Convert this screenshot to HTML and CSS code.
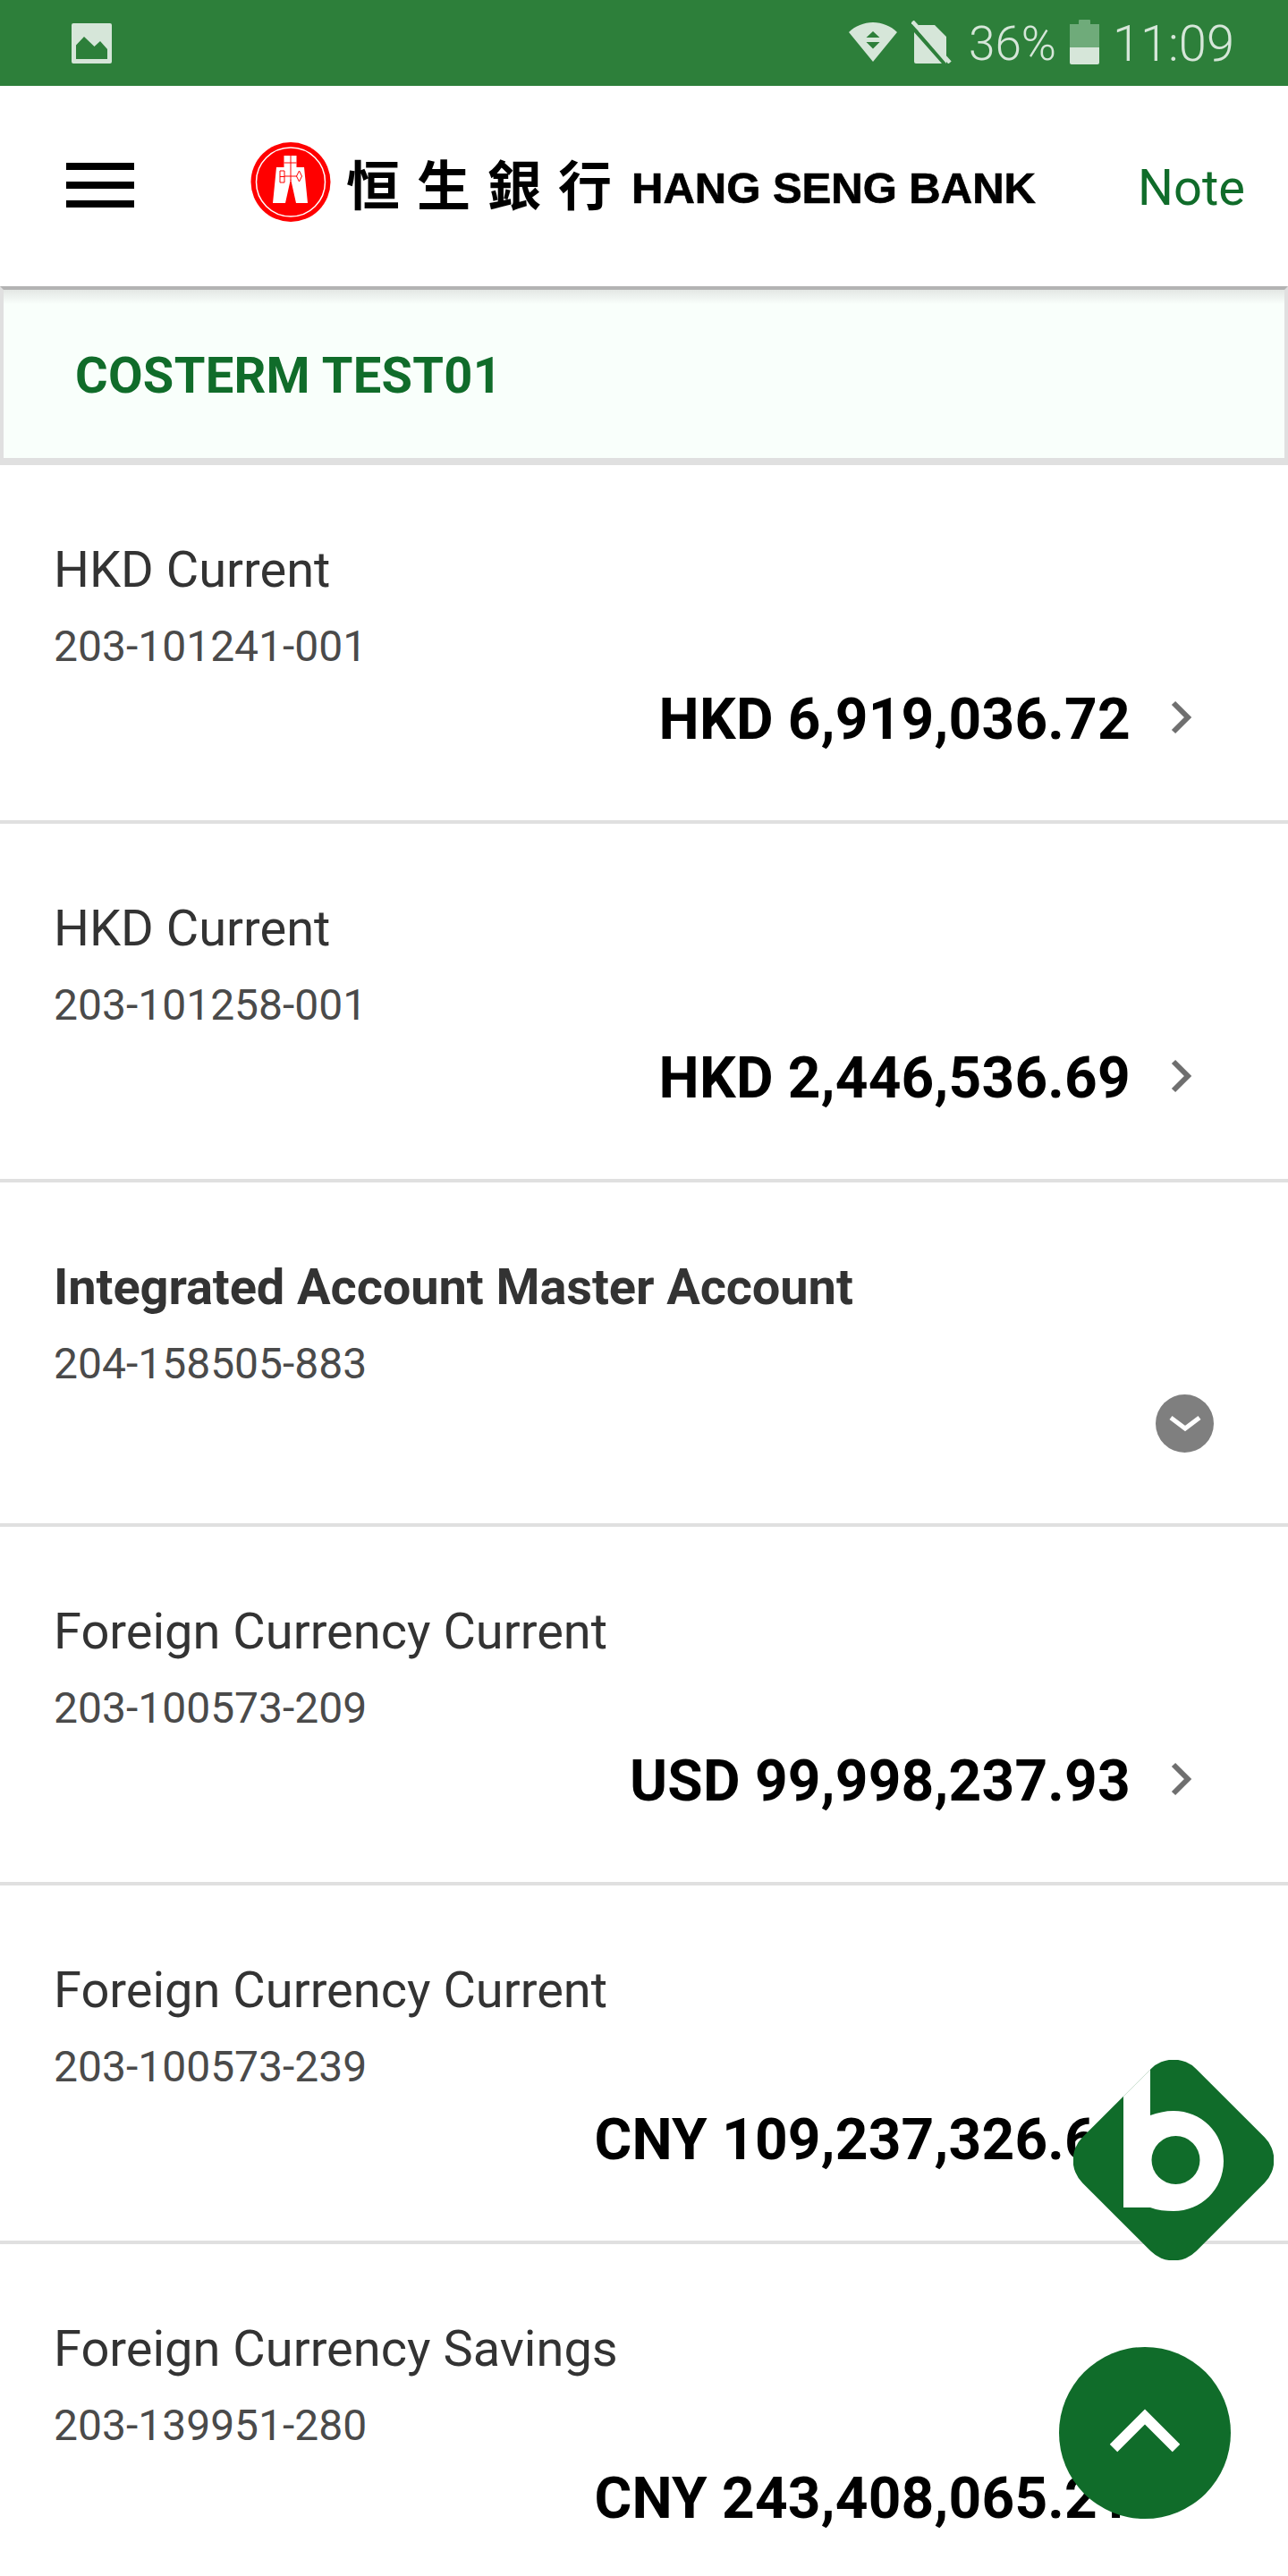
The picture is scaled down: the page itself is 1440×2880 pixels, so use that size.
FILE: index.html
```html
<!DOCTYPE html>
<html lang="en">
<head>
<meta charset="utf-8">
<title>Hang Seng Bank</title>
<link rel="stylesheet" href="styles.css">
</head>
<body>
<div class="screen">
  <div class="status">
    <svg class="ic-image" viewBox="0 0 45 45" width="45" height="45"><path fill="#d6e6d9" fill-rule="evenodd" d="M2 0h41a2 2 0 0 1 2 2v41a2 2 0 0 1-2 2H2a2 2 0 0 1-2-2V2a2 2 0 0 1 2-2zM5 40h35V29l-8-9-6.500 6-11.500-11-9 9.500z"/></svg>
    <div class="status-right">
      <svg class="ic-wifi" viewBox="0 0 54 44" width="54" height="44"><path fill="#d6e6d9" fill-rule="evenodd" d="M0 11C7 4 17 0 27 0s20 4 27 11L27 44zM27 10l-7.500 7h15zM19.500 22l7.500 7.500 7.500-7.500z"/></svg>
      <svg class="ic-sim" viewBox="0 0 46 48" width="46" height="48"><path fill="#d6e6d9" d="M8 5h18l13 13v30L8 12zM3 13l31 35H5a2 2 0 0 1-2-2z"/><path stroke="#d6e6d9" stroke-width="4.500" d="M1 1l42 46"/></svg>
      <span class="pct">36%</span>
      <div class="battery"><i class="batt-nub"></i><i class="batt-empty"></i><i class="batt-full"></i></div>
      <span class="time">11:09</span>
    </div>
  </div>

  <header class="topbar">
    <div class="burger"><i></i><i></i><i></i></div>
    <div class="logo">
      <svg class="logo-mark" viewBox="0 0 90 90" width="90" height="90">
        <circle cx="45" cy="44.500" r="44.500" fill="#f00"/>
        <circle cx="45" cy="44.500" r="38.500" fill="none" stroke="#fff" stroke-width="1.500"/>
        <path fill="#fff" d="M37.500 15h14v13H60l4 40H51l-6-27-6 27H25l4-40h8.500z"/>
        <path fill="none" stroke="#f00" stroke-width="1" d="M45 15v28M37.500 23h14M33 32v13h5V32zM33 38.500h5M38 38h14M54.500 32l3 6-3 6-3-6z"/>
      </svg>
      <span class="logo-zh">恒生銀行</span>
      <span class="logo-en">HANG SENG BANK</span>
    </div>
    <span class="note">Note</span>
  </header>

  <section class="holder"><div class="holder-in">COSTERM TEST01</div></section>

  <main class="list">
    <div class="row">
      <div class="r-title">HKD Current</div>
      <div class="r-num">203-101241-001</div>
      <div class="r-amt"><b>HKD 6,919,036.72</b><svg class="chev" viewBox="0 0 24 38" width="24" height="38"><path fill="none" stroke="#6f6f6f" stroke-width="6" d="M3 3l16 16L3 35"/></svg></div>
    </div>
    <div class="row">
      <div class="r-title">HKD Current</div>
      <div class="r-num">203-101258-001</div>
      <div class="r-amt"><b>HKD 2,446,536.69</b><svg class="chev" viewBox="0 0 24 38" width="24" height="38"><path fill="none" stroke="#6f6f6f" stroke-width="6" d="M3 3l16 16L3 35"/></svg></div>
    </div>
    <div class="row row-open">
      <div class="r-title r-strong">Integrated Account Master Account</div>
      <div class="r-num">204-158505-883</div>
      <div class="r-more"><svg viewBox="0 0 65 65" width="65" height="65"><circle cx="32.500" cy="32.500" r="32.500" fill="#7f7f7f"/><path fill="none" stroke="#fff" stroke-width="5" d="M17 26l16 12 16-12"/></svg></div>
    </div>
    <div class="row">
      <div class="r-title">Foreign Currency Current</div>
      <div class="r-num">203-100573-209</div>
      <div class="r-amt"><b>USD 99,998,237.93</b><svg class="chev" viewBox="0 0 24 38" width="24" height="38"><path fill="none" stroke="#6f6f6f" stroke-width="6" d="M3 3l16 16L3 35"/></svg></div>
    </div>
    <div class="row">
      <div class="r-title">Foreign Currency Current</div>
      <div class="r-num">203-100573-239</div>
      <div class="r-amt"><b>CNY 109,237,326.69</b><svg class="chev" viewBox="0 0 24 38" width="24" height="38"><path fill="none" stroke="#6f6f6f" stroke-width="6" d="M3 3l16 16L3 35"/></svg></div>
    </div>
    <div class="row">
      <div class="r-title">Foreign Currency Savings</div>
      <div class="r-num">203-139951-280</div>
      <div class="r-amt"><b>CNY 243,408,065.21</b><svg class="chev" viewBox="0 0 24 38" width="24" height="38"><path fill="none" stroke="#6f6f6f" stroke-width="6" d="M3 3l16 16L3 35"/></svg></div>
    </div>
  </main>

  <svg class="fab-b" viewBox="0 0 224 224" width="224" height="224">
    <defs>
      <clipPath id="dia"><rect x="22" y="22" width="180" height="180" rx="36" transform="rotate(45 112 112)"/></clipPath>
    </defs>
    <rect x="22" y="22" width="180" height="180" rx="36" fill="#106c2a" transform="rotate(45 112 112)"/>
    <g clip-path="url(#dia)">
      <path fill="#fff" d="M56 0h30v62c8-3 17-5 26-5 31 0 56 24 56 56s-25 56-56 56c-9 0-18-1-26-4v0H56z"/>
      <circle cx="114.500" cy="112" r="27" fill="#106c2a"/>
    </g>
  </svg>

  <div class="fab-up"><svg viewBox="0 0 78 50" width="78" height="50"><path fill="none" stroke="#fff" stroke-width="12" d="M4 45L39 10l35 35"/></svg></div>
</div>
</body>
</html>
```
FILE: styles.css
```css
* { box-sizing: border-box; }
html, body { margin: 0; padding: 0; background: #fff; }
.screen {
  position: relative;
  width: 1440px;
  height: 2880px;
  overflow: hidden;
  display: flex;
  flex-direction: column;
  font-family: Roboto, "Liberation Sans", sans-serif;
  background: #fff;
}

/* status bar */
.status {
  flex: none;
  height: 96px;
  background: #2d7f3a;
  color: #d6e6d9;
  display: flex;
  align-items: center;
  justify-content: space-between;
  padding: 0 60px 0 80px;
}
.status-right { display: flex; align-items: center; }
.ic-wifi { margin-right: 16px; margin-left: 2px; margin-top: -2px; }
.ic-sim { margin-right: 18px; margin-top: -2px; }
.pct { font-size: 53px; font-weight: 300; line-height: 60px; margin-right: 15px; margin-top: 2px; }
.time { font-size: 56px; font-weight: 300; line-height: 60px; margin-left: 15px; margin-top: 2px; }
.battery { width: 33px; height: 50px; display: flex; flex-direction: column; align-items: center; margin-top: -2px; }
.battery i { display: block; }
.batt-nub { width: 13px; height: 5px; background: #6fab7a; border-radius: 1px 1px 0 0; }
.batt-empty { width: 33px; height: 26px; background: #6fab7a; }
.batt-full { width: 33px; height: 19px; background: #d6e6d9; border-radius: 0 0 2px 2px; }

/* top bar */
.topbar {
  flex: none;
  height: 224px;
  display: flex;
  align-items: center;
  padding: 0 48px 0 74px;
  background: #fff;
}
.burger { width: 76px; display: flex; flex-direction: column; gap: 13px; margin-top: -2px; }
.burger i { display: block; height: 8px; background: #000; }
.logo { display: flex; align-items: center; margin-left: 130px; flex: 1; color: #000; }
.logo-mark { flex: none; margin-top: -8px; }
.logo-zh {
  font-family: "Noto Sans CJK TC", sans-serif;
  font-weight: 700;
  font-size: 60px;
  letter-spacing: 19px;
  line-height: 70px;
  margin-left: 17px;
  margin-top: -8px;
}
.logo-en {
  font-family: "Liberation Sans", Arial, sans-serif;
  font-weight: 700;
  font-size: 49px;
  line-height: 60px;
  margin-left: 3px;
  margin-top: 3px;
  -webkit-text-stroke: 0.7px #000;
}
.note { font-size: 56px; line-height: 64px; color: #106c2a; margin-top: 3px; }

/* account holder band */
.holder {
  flex: none;
  height: 200px;
  border-style: solid;
  border-color: #b3b3b3 #e0e0e0 #e0e0e0;
  border-width: 4px 4px 8px;
}
.holder-in {
  height: 100%;
  display: flex;
  align-items: center;
  padding: 3px 0 0 80px;
  background: linear-gradient(#e3e7e4, #f9fffb 16px);
  color: #106c2a;
  font-size: 56px;
  font-weight: 700;
  letter-spacing: 0.3px;
}

/* rows */
.list { flex: none; }
.row {
  height: 401px;
  padding: 85px 60px 0;
  border-bottom: 4px solid #e0e0e0;
}
.row-open { height: 385px; }
.r-title { font-size: 56px; line-height: 64px; color: #333; }
.r-strong { font-weight: 700; letter-spacing: -0.1px; }
.r-num { font-size: 48px; line-height: 56px; margin-top: 26px; color: #4a4a4a; }
.r-amt {
  display: flex;
  align-items: center;
  justify-content: flex-end;
  height: 72px;
  margin-top: 17px;
  color: #000;
  font-size: 64px;
}
.r-amt b { font-weight: 700; letter-spacing: 0.22px; }
.chev { flex: none; margin: -5px 47px 0 45px; }
.r-more { display: flex; justify-content: flex-end; margin-top: 6px; padding-right: 23px; }
.r-more svg { display: block; }

/* floating buttons */
.fab-b { position: absolute; left: 1200px; top: 2303px; }
.fab-up {
  position: absolute;
  left: 1184px;
  top: 2624px;
  width: 192px;
  height: 192px;
  border-radius: 50%;
  background: #106c2a;
  display: flex;
  align-items: center;
  justify-content: center;
}
.fab-up svg { margin-top: -6px; }
```
